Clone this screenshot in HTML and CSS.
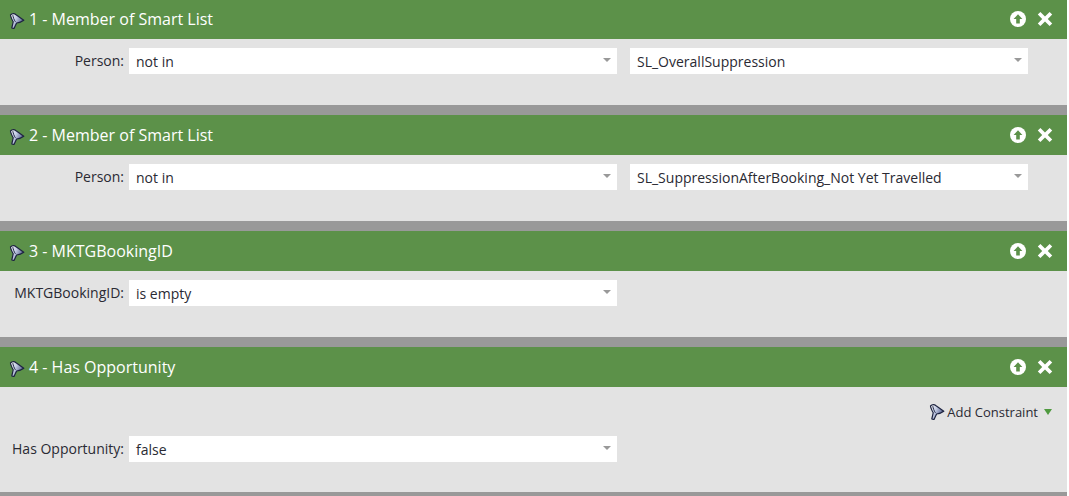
FILE: index.html
```html
<!DOCTYPE html>
<html lang="en">
<head>
<meta charset="utf-8">
<title>Smart List Filters</title>
<link rel="stylesheet" href="styles.css">
</head>
<body>
<svg class="defs" width="0" height="0" aria-hidden="true">
  <defs>
    <linearGradient id="fun" x1="0" y1="0" x2="1" y2="0.5">
      <stop offset="0" stop-color="#ffffff"/>
      <stop offset="0.45" stop-color="#c4cce4"/>
      <stop offset="1" stop-color="#4a5585"/>
    </linearGradient>
    <symbol id="funnel" viewBox="0 0 16 16">
      <path d="M1.5 2 C3 .4 5.6 .6 7.4 2 L14.8 7.2 C12.6 8.8 10 9.8 7.6 10 L5 15.6 L2.8 15 L4.2 8.8 C3 6.6 1.6 4 1.5 2 Z" fill="url(#fun)" stroke="#1e2440" stroke-width="1.2" stroke-linejoin="round"/>
      <path d="M3.8 2.2 C4.2 4.4 5 6.8 6.4 8.8" stroke="#1e2440" stroke-width="1" fill="none"/>
    </symbol>
    <symbol id="up" viewBox="0 0 16 16">
      <circle cx="8" cy="8" r="8" fill="#fff"/>
      <path d="M8 3.2 L12.4 8 H9.8 V12.4 H6.2 V8 H3.6 Z" fill="#5c9149"/>
    </symbol>
    <symbol id="close" viewBox="0 0 16 16">
      <path d="M3.4 1 L8 5.4 L12.6 1 L15.2 3.6 L10.8 8 L15.2 12.4 L12.6 15 L8 10.6 L3.4 15 L.8 12.4 L5.2 8 L.8 3.6 Z" fill="#fff"/>
    </symbol>
  </defs>
</svg>
<main class="list">
  <section class="filter">
    <header class="bar">
      <svg class="funnel"><use href="#funnel"/></svg>
      <h2 class="title">1 - Member of Smart List</h2>
      <svg class="act up"><use href="#up"/></svg>
      <svg class="act close"><use href="#close"/></svg>
    </header>
    <div class="body">
      <div class="row">
        <span class="label">Person:</span>
        <div class="select main"><span>not in</span><i class="caret"></i></div>
        <div class="select second"><span>SL_OverallSuppression</span><i class="caret"></i></div>
      </div>
    </div>
  </section>
  <section class="filter">
    <header class="bar">
      <svg class="funnel"><use href="#funnel"/></svg>
      <h2 class="title">2 - Member of Smart List</h2>
      <svg class="act up"><use href="#up"/></svg>
      <svg class="act close"><use href="#close"/></svg>
    </header>
    <div class="body">
      <div class="row">
        <span class="label">Person:</span>
        <div class="select main"><span>not in</span><i class="caret"></i></div>
        <div class="select second"><span>SL_SuppressionAfterBooking_Not Yet Travelled</span><i class="caret"></i></div>
      </div>
    </div>
  </section>
  <section class="filter">
    <header class="bar">
      <svg class="funnel"><use href="#funnel"/></svg>
      <h2 class="title">3 - MKTGBookingID</h2>
      <svg class="act up"><use href="#up"/></svg>
      <svg class="act close"><use href="#close"/></svg>
    </header>
    <div class="body">
      <div class="row">
        <span class="label">MKTGBookingID:</span>
        <div class="select main"><span>is empty</span><i class="caret"></i></div>
      </div>
    </div>
  </section>
  <section class="filter last">
    <header class="bar">
      <svg class="funnel"><use href="#funnel"/></svg>
      <h2 class="title">4 - Has Opportunity</h2>
      <svg class="act up"><use href="#up"/></svg>
      <svg class="act close"><use href="#close"/></svg>
    </header>
    <div class="body tall">
      <div class="constraint">
        <svg class="funnel add"><use href="#funnel"/></svg>
        <span>Add Constraint</span>
        <i class="green"></i>
      </div>
      <div class="row">
        <span class="label">Has Opportunity:</span>
        <div class="select main"><span>false</span><i class="caret"></i></div>
      </div>
    </div>
  </section>
</main>
</body>
</html>
```

FILE: styles.css
```css
* { box-sizing: border-box; }
html, body { margin: 0; padding: 0; background: #fff; overflow: hidden; }
body { height: 496px; font-family: "Open Sans", "Liberation Sans", sans-serif; color: #2a2a33; }
.defs { display: block; height: 0; }
.list { width: 1067px; margin-top: -1px; }
.filter { border-bottom: 10px solid #999; }
.filter.last { border-bottom-width: 4px; }
.bar { height: 40px; background: #5c9149; display: flex; align-items: center; padding: 0 14px 0 9px; }
.funnel { width: 16px; height: 16px; flex: none; margin-top: 3px; }
.title { margin: 0 0 0 4px; font-size: 16px; font-weight: 400; color: #fff; flex: 1; line-height: 22px; }
.act { width: 16px; height: 16px; flex: none; }
.up { margin-right: 11px; }
.body { height: 66px; background: #e3e3e3; padding-top: 9px; }
.body.tall { height: 105px; padding-top: 16px; }
.row { display: flex; align-items: center; height: 26px; }
.label { width: 124px; text-align: right; font-size: 14px; line-height: 18px; margin-right: 5px; flex: none; }
.select { height: 26px; background: #fff; display: flex; align-items: center; justify-content: space-between; padding: 1px 6px 0 7px; font-size: 14px; color: #2a2a33; flex: none; }
.main { width: 488px; }
.second { width: 398px; margin-left: 13px; }
.caret { width: 0; height: 0; border-left: 4px solid transparent; border-right: 4px solid transparent; border-top: 4px solid #999; margin-top: -3px; }
.constraint { display: flex; align-items: center; justify-content: flex-end; height: 18px; margin-bottom: 15px; padding-right: 15px; font-size: 13px; color: #2a2a33; }
.funnel.add { margin: 0 2px 0 0; }
.green { width: 0; height: 0; margin-left: 6px; border-left: 4px solid transparent; border-right: 4px solid transparent; border-top: 6px solid #4f9a3f; }
```
